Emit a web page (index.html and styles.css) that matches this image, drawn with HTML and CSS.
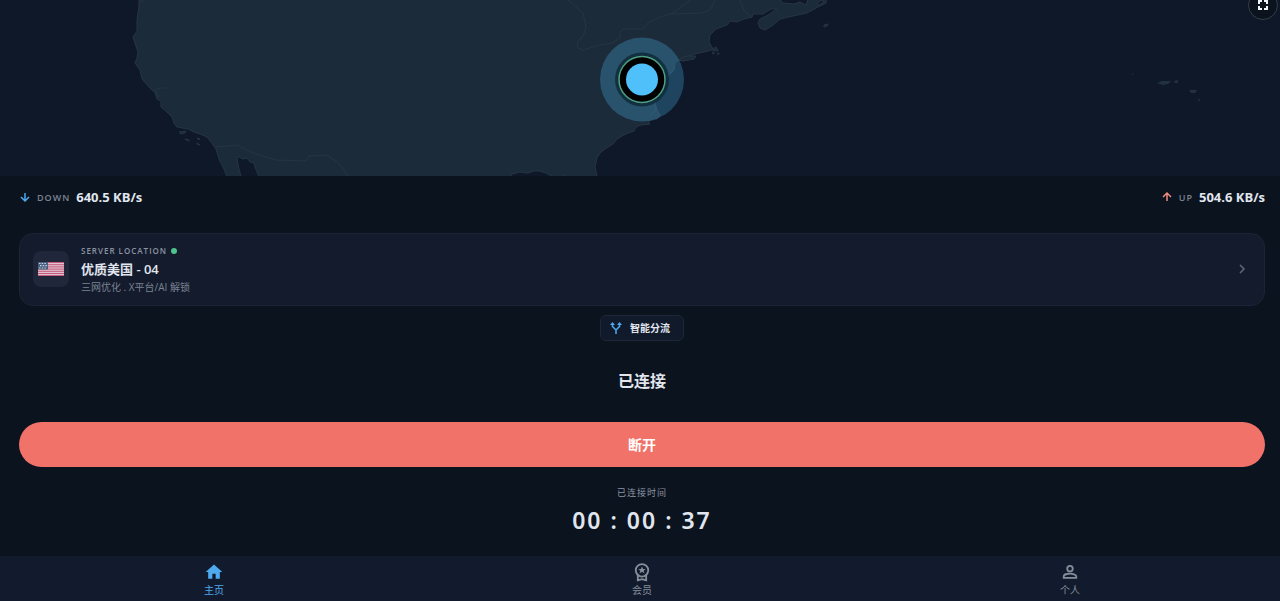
FILE: index.html
```html
<!DOCTYPE html>
<html lang="zh-CN">
<head>
<meta charset="utf-8">
<meta name="viewport" content="width=device-width, initial-scale=1">
<title>已连接</title>
<link rel="stylesheet" href="styles.css">
</head>
<body>
<div class="app">
  <section class="map" aria-label="Map">
    <svg class="map-art" viewBox="0 0 1284 176" preserveAspectRatio="xMidYMid slice" aria-hidden="true">
      <g class="land">
        <path d="M139-4L139 6 137 20 137 31 133 37 135 43 138 52 137 58 135 63 140 70 142 79 149 87 155 93 157 99 161 101 161 107 167 112 172 117 174 123 177 127 188 129 194 132 200 134 207 137 211 142 216 149 219 159 224 169 228 180H242L238 165 237 157 240 157 242 159 247 158 250 162 254 163 255 167 260 180H509L512 174 520 172 528 173 534 171 540 171 546 173 551 176 558 178 565 175 570 180H598L595 167 597 158 600 153 605 149 613 144 617 139 622 136 628 133 634 131 636 127 641 125 650 124 648 121 657 119 660 115 657 110 655 103 658 96 666 80 668 76 674 70 675 62 684 58 694 54 704 52 711 50 718 51 716 47 713 49 709 42 710 35 716 29 727 25 730 21 737 22 744 19 752 17 753 14 763 14 771 9 777 9 768 15 760 19 758 23 760 28 765 30 773 25 780 19 793 16 807 13 818 7 826 3V-4Z"/>
        <path d="M678 60L686 56 696 56 694 59 683 61ZM824 25l4-1-1 2-3 1ZM179 132l7-1-1 2-4 1ZM185 139l4 1v1ZM197 138l3 1-1 1ZM197 143l3 2-3-1ZM712 53l2-1v2ZM717 54l2-1v1Z"/>
      </g>
      <path class="water" d="M777-4L783 3 794 4 800 2 806 5 809-4ZM817 3l5-3 2 2-5 3Z"/>
      <path class="border" d="M568 0L575 6 583 13 585 22 586 28 583 36 577 43 578 48 583 50 600 45 612 43 620 38 620 32 623 29 643 29 648 23 657 18 673 13 681 7 690 0M670 14L700 13 708 11 712 7 715 0M740 0L744 11 752 17M139 1H145M155 90L160 88H166M155 90L159 97M216 147L237 145 251 152 275 160 306 161 309 156 327 155 336 161 343 168 348 176M656 105L655 111 650 115"/>
      <g class="islands">
        <path d="M1131 73l3 1-1 1ZM1157 83l5-2 9 0-3 3-5 1ZM1174 81l4-1v3h-3ZM1189 90h8l-2 3h-4ZM1197 100l3-1v2Z"/>
      </g>
      <g transform="translate(642 79.500)">
        <circle class="halo" r="42"/>
        <circle class="ring-shade" r="27"/>
        <circle class="ring-dark" r="23"/>
        <circle class="ring-green" r="23"/>
        <circle class="dot" r="16"/>
      </g>
    </svg>
    <button class="fullscreen" type="button" aria-label="Fullscreen">
      <svg width="14" height="14" viewBox="0 0 14 14" aria-hidden="true"><path d="M3 6V3H6M8 3H11V6M11 8V11H8M6 11H3V8"/></svg>
    </button>
  </section>

  <main class="panel">
    <div class="stats">
      <div class="stat">
        <svg class="arrow down" width="12" height="12" viewBox="0 0 12 12" aria-hidden="true"><path d="M6 2V10M2 6L6 10 10 6"/></svg>
        <span class="stat-label">DOWN</span>
        <span class="stat-value">640.5 KB/s</span>
      </div>
      <div class="stat">
        <svg class="arrow up" width="12" height="12" viewBox="0 0 12 12" aria-hidden="true"><path d="M6 10V2M2 6L6 2 10 6"/></svg>
        <span class="stat-label">UP</span>
        <span class="stat-value">504.6 KB/s</span>
      </div>
    </div>

    <button class="server" type="button">
      <span class="flag">
        <svg width="26" height="14" viewBox="0 0 26 14" aria-hidden="true">
          <path fill="#dfc3d0" d="M0 0H26V14H0Z"/>
          <path stroke="#c4597a" stroke-width="1" d="M0 .5H26M0 2.7H26M0 4.9H26M0 7.1H26M0 9.3H26M0 11.5H26M0 13.5H26"/>
          <path fill="#47607f" d="M0 0H10V7.500H0Z"/>
          <path stroke="#c7d6e2" stroke-width="1.200" stroke-dasharray="1.500 1.200" d="M1 1.500H9M2 3.700H9M1 6H9"/>
        </svg>
      </span>
      <span class="server-text">
        <span class="server-caption">SERVER LOCATION <i class="online"></i></span>
        <span class="server-name">优质美国 - 04</span>
        <span class="server-note">三网优化 . X平台/AI 解锁</span>
      </span>
      <svg class="chevron" width="12" height="12" viewBox="0 0 12 12" aria-hidden="true"><path d="M4 2L8 6 4 10"/></svg>
    </button>

    <button class="mode" type="button">
      <svg width="12" height="12" viewBox="0 0 12 12" aria-hidden="true"><path d="M6 12V8L2.500 4.500V2M6 8L9.500 4.500V2" fill="none" stroke="currentColor" stroke-width="1.500"/><path d="M0 3L2.500 0 5 3ZM7 3L9.500 0 12 3Z" fill="currentColor"/></svg>
      <span>智能分流</span>
    </button>

    <h1 class="status">已连接</h1>
    <button class="disconnect" type="button">断开</button>
    <p class="timer-label">已连接时间</p>
    <p class="timer">00 : 00 : 37</p>
  </main>

  <nav class="tabs">
    <a class="tab active" href="#home">
      <svg width="20" height="20" viewBox="0 0 24 24" aria-hidden="true"><path fill="currentColor" d="M10 20v-6h4v6h5v-8h3L12 3 2 12h3v8z"/></svg>
      <span>主页</span>
    </a>
    <a class="tab" href="#member">
      <svg width="20" height="20" viewBox="0 0 24 24" aria-hidden="true"><g fill="none" stroke="currentColor" stroke-width="2.200"><circle cx="12" cy="10" r="7.500"/><path d="M7 15V22L12 20.500 17 22V15"/></g><path fill="currentColor" d="M12 5.500l1.300 3h3.200l-2.500 2 1 3.200-3-1.900-3 1.900 1-3.200-2.500-2h3.200z"/></svg>
      <span>会员</span>
    </a>
    <a class="tab" href="#me">
      <svg width="20" height="20" viewBox="0 0 24 24" aria-hidden="true"><g fill="none" stroke="currentColor" stroke-width="2.200"><circle cx="12" cy="8" r="3.300"/><path d="M4.500 19V17C4.500 15 9 14 12 14S19.500 15 19.500 17V19Z"/></g></svg>
      <span>个人</span>
    </a>
  </nav>
</div>
</body>
</html>
```
FILE: styles.css
```css
* { box-sizing: border-box; }

body {
  margin: 0;
  overflow-x: hidden;
  background: #0b131f;
  color: #e1e6ee;
  font-family: "Open Sans", "Noto Sans CJK SC", sans-serif;
}

button { font: inherit; color: inherit; cursor: pointer; }
p, h1 { margin: 0; }
svg { display: block; flex: none; }

.app {
  display: flex;
  flex-direction: column;
  min-height: 100vh;
  margin-right: -4px;
}

.map {
  position: relative;
  flex: 1 0 176px;
  overflow: hidden;
  background: #0f1829;
}
.map-art { position: absolute; width: 100%; height: 100%; }
.land { fill: #1c2b39; stroke: #263543; stroke-width: 1; }
.water { fill: #0f1829; stroke: #263543; }
.border { fill: none; stroke: #263543; stroke-width: 1; }
.islands { fill: #223140; }
.halo { fill: #4fbbf7; fill-opacity: .27; }
.ring-shade { fill: #0d2a38; fill-opacity: .85; }
.ring-dark { fill: #000; }
.ring-green { fill: none; stroke: #4fa083; stroke-width: 1.5; }
.dot { fill: #4fc0fa; }

.fullscreen {
  position: absolute;
  top: -10px;
  right: 6px;
  display: grid;
  place-items: center;
  width: 30px;
  height: 30px;
  padding: 0;
  border: 1px solid #353d49;
  border-radius: 50%;
  background: #0b131f;
}
.fullscreen path { fill: none; stroke: #f2f5f9; stroke-width: 2; }

.panel {
  display: flex;
  flex-direction: column;
  padding: 11px 19px 20px;
}

.stats { display: flex; justify-content: space-between; margin-bottom: 26px; }
.stat { display: flex; align-items: center; height: 20px; }
.arrow, .chevron { fill: none; stroke-width: 1.5; }
.down { stroke: #4ea9ee; }
.up { stroke: #ef8a80; }
.stat-label {
  margin: 0 6px;
  color: #7b8391;
  font-size: 9px;
  font-weight: 600;
  letter-spacing: 1px;
}
.stat-value { font-size: 13px; font-weight: 700; }

.server {
  display: flex;
  align-items: center;
  gap: 12px;
  height: 73px;
  padding: 0 16px 2px 13px;
  border: 1px solid #1b2537;
  border-radius: 14px;
  background: #131b2d;
  text-align: left;
}
.flag {
  display: grid;
  place-items: center;
  width: 36px;
  height: 36px;
  border-radius: 8px;
  background: #20273a;
}
.server-text { display: flex; flex: 1; flex-direction: column; }
.server-caption {
  display: flex;
  align-items: center;
  gap: 4px;
  height: 16px;
  color: #8c94a2;
  font-size: 8px;
  font-weight: 600;
  letter-spacing: 1px;
}
.online { width: 6px; height: 6px; border-radius: 50%; background: #4fc38c; }
.server-name { height: 20px; font-size: 13px; font-weight: 600; line-height: 20px; }
.server-note { height: 16px; color: #7b8391; font-size: 10px; line-height: 16px; }
.chevron { stroke: #626a78; }

.mode {
  display: flex;
  align-items: center;
  align-self: center;
  gap: 8px;
  height: 26px;
  margin-top: 9px;
  padding: 0 13px 1px 9px;
  border: 1px solid #1d2739;
  border-radius: 6px;
  background: #111a2b;
  font-size: 10px;
  font-weight: 700;
}
.mode svg { color: #4ea9ee; }

.status {
  margin-top: 29px;
  font-size: 16px;
  font-weight: 600;
  line-height: 22px;
  text-align: center;
}
.disconnect {
  height: 45px;
  margin-top: 30px;
  padding: 0 0 2px;
  border: 0;
  border-radius: 23px;
  background: #f17269;
  color: #fff;
  font-size: 14px;
  font-weight: 700;
}
.timer-label {
  margin-top: 18px;
  color: #8c94a2;
  font-size: 9px;
  line-height: 16px;
  letter-spacing: 1px;
  text-align: center;
}
.timer {
  margin-top: 4px;
  font-family: "Noto Sans", sans-serif;
  font-size: 23px;
  font-weight: 600;
  line-height: 31px;
  letter-spacing: 2px;
  text-align: center;
}

.tabs {
  display: grid;
  grid-template-columns: repeat(3, 1fr);
  height: 45px;
  background: #121b2d;
}
.tab {
  display: flex;
  flex-direction: column;
  align-items: center;
  padding-top: 6px;
  color: #858d99;
  font-size: 10px;
  line-height: 16px;
  text-decoration: none;
}
.tab.active { color: #4ea9ee; }
```
